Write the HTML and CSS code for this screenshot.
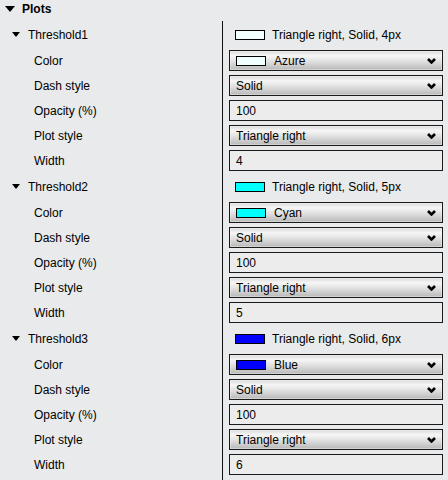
FILE: index.html
```html
<!DOCTYPE html>
<html lang="en">
<head>
    <meta charset="UTF-8">
    <meta name="viewport" content="width=device-width, initial-scale=1.0">
    <title>Plots</title>
    <link rel="stylesheet" href="styles.css">
</head>
<body>

<div class="panel">
    <div class="category">
        <svg class="arrow big" width="10" height="6" viewBox="0 0 10 6"><polygon points="0,0 10,0 5,6" fill="#000"/></svg>
        <span>Plots</span>
    </div>

    <div class="props">
        <!-- Threshold1 -->
        <div class="row head first">
            <div class="label"><svg class="arrow" width="8" height="5" viewBox="0 0 8 5"><polygon points="0,0 8,0 4,5" fill="#000"/></svg>Threshold1</div>
            <div class="value"><span class="swatch azure"></span>Triangle right, Solid, 4px</div>
        </div>
        <div class="row">
            <div class="label sub">Color</div>
            <div class="value"><div class="dropdown"><span class="swatch azure"></span><span class="name">Azure</span><svg class="chev" width="9" height="6" viewBox="0 0 9 6"><polyline points="1,1 4.5,4.5 8,1" fill="none" stroke="#000" stroke-width="2.6"/></svg></div></div>
        </div>
        <div class="row">
            <div class="label sub">Dash style</div>
            <div class="value"><div class="dropdown"><span>Solid</span><svg class="chev" width="9" height="6" viewBox="0 0 9 6"><polyline points="1,1 4.5,4.5 8,1" fill="none" stroke="#000" stroke-width="2.6"/></svg></div></div>
        </div>
        <div class="row">
            <div class="label sub">Opacity (%)</div>
            <div class="value"><div class="field">100</div></div>
        </div>
        <div class="row">
            <div class="label sub">Plot style</div>
            <div class="value"><div class="dropdown"><span>Triangle right</span><svg class="chev" width="9" height="6" viewBox="0 0 9 6"><polyline points="1,1 4.5,4.5 8,1" fill="none" stroke="#000" stroke-width="2.6"/></svg></div></div>
        </div>
        <div class="row">
            <div class="label sub">Width</div>
            <div class="value"><div class="field">4</div></div>
        </div>

        <!-- Threshold2 -->
        <div class="row head">
            <div class="label"><svg class="arrow" width="8" height="5" viewBox="0 0 8 5"><polygon points="0,0 8,0 4,5" fill="#000"/></svg>Threshold2</div>
            <div class="value"><span class="swatch cyan"></span>Triangle right, Solid, 5px</div>
        </div>
        <div class="row">
            <div class="label sub">Color</div>
            <div class="value"><div class="dropdown"><span class="swatch cyan"></span><span class="name">Cyan</span><svg class="chev" width="9" height="6" viewBox="0 0 9 6"><polyline points="1,1 4.5,4.5 8,1" fill="none" stroke="#000" stroke-width="2.6"/></svg></div></div>
        </div>
        <div class="row">
            <div class="label sub">Dash style</div>
            <div class="value"><div class="dropdown"><span>Solid</span><svg class="chev" width="9" height="6" viewBox="0 0 9 6"><polyline points="1,1 4.5,4.5 8,1" fill="none" stroke="#000" stroke-width="2.6"/></svg></div></div>
        </div>
        <div class="row">
            <div class="label sub">Opacity (%)</div>
            <div class="value"><div class="field">100</div></div>
        </div>
        <div class="row">
            <div class="label sub">Plot style</div>
            <div class="value"><div class="dropdown"><span>Triangle right</span><svg class="chev" width="9" height="6" viewBox="0 0 9 6"><polyline points="1,1 4.5,4.5 8,1" fill="none" stroke="#000" stroke-width="2.6"/></svg></div></div>
        </div>
        <div class="row">
            <div class="label sub">Width</div>
            <div class="value"><div class="field">5</div></div>
        </div>

        <!-- Threshold3 -->
        <div class="row head">
            <div class="label"><svg class="arrow" width="8" height="5" viewBox="0 0 8 5"><polygon points="0,0 8,0 4,5" fill="#000"/></svg>Threshold3</div>
            <div class="value"><span class="swatch blue"></span>Triangle right, Solid, 6px</div>
        </div>
        <div class="row">
            <div class="label sub">Color</div>
            <div class="value"><div class="dropdown"><span class="swatch blue"></span><span class="name">Blue</span><svg class="chev" width="9" height="6" viewBox="0 0 9 6"><polyline points="1,1 4.5,4.5 8,1" fill="none" stroke="#000" stroke-width="2.6"/></svg></div></div>
        </div>
        <div class="row">
            <div class="label sub">Dash style</div>
            <div class="value"><div class="dropdown"><span>Solid</span><svg class="chev" width="9" height="6" viewBox="0 0 9 6"><polyline points="1,1 4.5,4.5 8,1" fill="none" stroke="#000" stroke-width="2.6"/></svg></div></div>
        </div>
        <div class="row">
            <div class="label sub">Opacity (%)</div>
            <div class="value"><div class="field">100</div></div>
        </div>
        <div class="row">
            <div class="label sub">Plot style</div>
            <div class="value"><div class="dropdown"><span>Triangle right</span><svg class="chev" width="9" height="6" viewBox="0 0 9 6"><polyline points="1,1 4.5,4.5 8,1" fill="none" stroke="#000" stroke-width="2.6"/></svg></div></div>
        </div>
        <div class="row">
            <div class="label sub">Width</div>
            <div class="value"><div class="field">6</div></div>
        </div>
        <div class="row end">
            <div class="label"></div>
            <div class="value"></div>
        </div>
    </div>
</div>

</body>
</html>
```

FILE: styles.css
```css
body {
    margin: 0;
    background-color: #e9eaeb;
    font-family: "Liberation Sans", Arial, sans-serif;
    font-size: 12px;
    color: #000;
}
.panel {
    width: 448px;
    height: 480px;
    overflow: hidden;
}
.category {
    display: flex;
    align-items: center;
    height: 19px;
    padding-left: 5px;
    padding-bottom: 2px;
    box-sizing: border-box;
    font-weight: bold;
}
.category .arrow {
    margin-right: 7px;
}
.row {
    display: grid;
    grid-template-columns: 223px 1fr;
    height: 25px;
}
.row.head {
    height: 27px;
}
.row.head.first {
    height: 29px;
    padding-top: 2px;
    box-sizing: border-box;
}
.row.end {
    height: 6px;
}
.label {
    display: flex;
    align-items: center;
    border-right: 1px solid #111;
    padding-left: 12px;
}
.label .arrow {
    margin-right: 8px;
}
.label.sub {
    padding-left: 34px;
}
.value {
    display: flex;
    align-items: center;
    padding: 0 5px 0 6px;
}
.swatch {
    display: inline-block;
    width: 30px;
    height: 10px;
    box-sizing: border-box;
    border: 1px solid #000;
    margin: 0 7px 0 6px;
}
.azure { background-color: #f0ffff; }
.cyan { background-color: #00ffff; }
.blue { background-color: #0000ff; }
.dropdown, .field {
    flex: 1;
    display: flex;
    align-items: center;
    height: 21px;
    box-sizing: border-box;
    border: 1px solid #1a1a1a;
    padding-left: 6px;
}
.dropdown {
    background: linear-gradient(to bottom, #dadada 0%, #f6f6f6 25%, #e0e0e0 55%, #b8b8b8 100%);
    box-shadow: inset 0 0 0 1px rgba(255, 255, 255, 0.35);
}
.dropdown .swatch {
    margin: 0 8px 0 0;
}
.dropdown .chev {
    margin-left: auto;
    margin-right: 6px;
}
.field {
    background-color: #ececec;
}
```
